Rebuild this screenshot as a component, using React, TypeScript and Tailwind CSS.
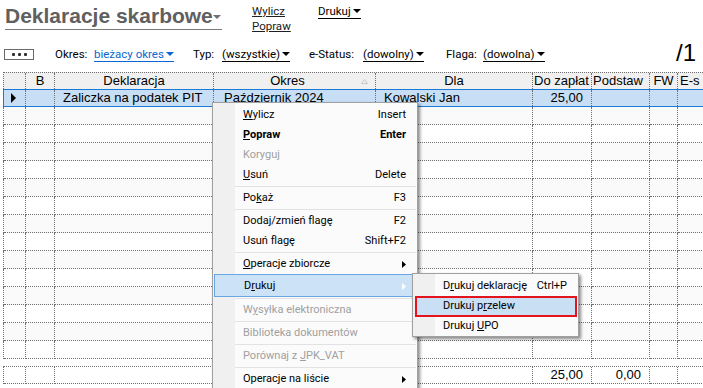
import type { ReactNode } from "react";

const dot = "border-dotted border-[#6f6f6f]";

const colW = [
  "w-[22px]",
  "w-[29px]",
  "w-[159px]",
  "w-[162px]",
  "w-[157px]",
  "w-[59px]",
  "w-[58px]",
  "w-[28px]",
  "w-[60px]",
];

function Caret({ color = "#000" }: { color?: string }) {
  return (
    <svg width="8" height="4" viewBox="0 0 8 4" className="ml-[2px] shrink-0">
      <path d="M0 0h8L4 4z" fill={color} />
    </svg>
  );
}

function Picker({ children, blue }: { children: ReactNode; blue?: boolean }) {
  return (
    <span
      className={`inline-flex h-[15px] items-center border-b leading-[14px] ${
        blue ? "border-[#0a66d0] text-[#0a66d0]" : "border-black text-black"
      }`}
    >
      {children}
      <Caret color={blue ? "#0a66d0" : "#000"} />
    </span>
  );
}

function Row({ shade }: { shade: boolean }) {
  return (
    <div className={`flex h-[18px] border-l ${dot} ${shade ? "bg-[#fafafa]" : "bg-white"}`}>
      {colW.map((w) => (
        <div key={w} className={`${w} shrink-0 border-r border-b ${dot}`} />
      ))}
    </div>
  );
}

type Item = {
  label: ReactNode;
  shortcut?: string;
  disabled?: boolean;
  bold?: boolean;
  arrow?: boolean;
  active?: boolean;
  sep?: boolean;
};

const menu: Item[] = [
  { label: <><u>W</u>ylicz</>, shortcut: "Insert" },
  { label: <><u>P</u>opraw</>, shortcut: "Enter", bold: true },
  { label: <>Korygu<u>j</u></>, disabled: true },
  { label: <><u>U</u>suń</>, shortcut: "Delete" },
  { sep: true, label: null },
  { label: <>Po<u>k</u>aż</>, shortcut: "F3" },
  { sep: true, label: null },
  { label: <>Dodaj/zmień fla<u>g</u>ę</>, shortcut: "F2" },
  { label: <>Usuń fla<u>g</u>ę</>, shortcut: "Shift+F2" },
  { sep: true, label: null },
  { label: <><u>O</u>peracje zbiorcze</>, arrow: true },
  { label: <>D<u>r</u>ukuj</>, arrow: true, active: true },
  { sep: true, label: null },
  { label: <>W<u>y</u>syłka elektroniczna</>, disabled: true },
  { sep: true, label: null },
  { label: <>Biblioteka dokumentów</>, disabled: true },
  { sep: true, label: null },
  { label: <>Porównaj z <u>J</u>PK_VAT</>, disabled: true },
  { sep: true, label: null },
  { label: <>Operacje na liście</>, arrow: true },
];

function MenuRow({ it }: { it: Item }) {
  if (it.sep)
    return (
      <div className="flex h-[3px] items-center pl-[22px] pr-[1px]">
        <div className="h-px w-full bg-[#e2e2e2]" />
      </div>
    );
  return (
    <div
      className={`flex items-center justify-between ${
        it.active
          ? "ml-[1px] mr-[3px] h-[23px] border border-[#6aa6e4] bg-[#cce3f7] pl-[29px] pr-[7px] pt-[2px]"
          : "h-[20px] pl-[30px] pr-[11px]"
      } ${it.disabled ? "text-[#a0a0a0]" : "text-black"} ${it.bold ? "font-bold" : ""}`}
    >
      <span>{it.label}</span>
      {it.shortcut && <span>{it.shortcut}</span>}
      {it.arrow && (
        <svg width="4" height="7" viewBox="0 0 4 7">
          <path d="M0 0l4 3.5L0 7z" fill={it.active ? "#ffffff" : "#000"} />
        </svg>
      )}
    </div>
  );
}

export default function App() {
  return (
    <div className="relative h-[388px] w-[703px] overflow-hidden bg-white font-['Roboto',sans-serif] text-[11.5px] text-black">
      {/* naglowek */}
      <div className="flex h-[47px] items-start pt-[4px]">
        <div className="ml-[5px] flex h-[26px] w-[217px] items-start border-b border-[#7a7a7a]">
          <span className="font-['Liberation_Sans',Arial,sans-serif] text-[21px] font-bold leading-[24px] text-[#606060]">
            Deklaracje skarbowe
          </span>
          <svg width="8" height="4" viewBox="0 0 8 4" className="ml-auto mr-[1px] mt-[11px]">
            <path d="M0 0h8L4 4z" fill="#707070" />
          </svg>
        </div>
        <div className="ml-[30px] flex w-[66px] flex-col leading-[15px] text-[#202020]">
          <span className="underline">Wylicz</span>
          <span className="underline">Popraw</span>
        </div>
        <Picker>Drukuj</Picker>
      </div>

      {/* filtry */}
      <div className="flex h-[15px] items-start pl-[4px]">
        <div className="w-[51px]">
          <div className="mt-[2px] flex h-[11px] w-[30px] items-center justify-center gap-[3px] border border-[#6a6a6a]">
            <div className="size-[3px] rounded-[1px] bg-[#303030]" />
            <div className="size-[3px] rounded-[1px] bg-[#303030]" />
            <div className="size-[3px] rounded-[1px] bg-[#303030]" />
          </div>
        </div>
        <div className="flex w-[138px] leading-[14px]">
          <span className="w-[39px]">Okres:</span>
          <Picker blue>bieżacy okres</Picker>
        </div>
        <div className="flex w-[116px] leading-[14px]">
          <span className="w-[29px]">Typ:</span>
          <Picker>(wszystkie)</Picker>
        </div>
        <div className="flex w-[137px] leading-[14px]">
          <span className="w-[54px]">e-Status:</span>
          <Picker>(dowolny)</Picker>
        </div>
        <div className="flex w-[230px] leading-[14px]">
          <span className="w-[37px]">Flaga:</span>
          <Picker>(dowolna)</Picker>
        </div>
        <span className="font-['Liberation_Sans',Arial,sans-serif] text-[24px] leading-[11px]">/1</span>
      </div>

      {/* tabela */}
      <div className="ml-[3px] mt-[10px] font-['Liberation_Sans',Arial,sans-serif] text-[13px] leading-[16px]">
        <div className={`flex border-l border-t bg-[#f0f0f0] ${dot}`}>
          {["", "B", "Deklaracja", "Okres", "Dla", "Do zapłat", "Podstaw", "FW", "E-s"].map((h, i) => (
            <div
              key={i}
              className={`${colW[i]} relative h-[16px] shrink-0 overflow-hidden whitespace-nowrap border-r ${dot} ${
                i >= 5 && i !== 7 ? "pl-[1px] text-left" : "text-center"
              } ${i === 3 ? "pr-[14px]" : ""} ${i === 8 ? "pl-[2px]" : ""}`}
            >
              {h}
              {i === 3 && (
                <svg width="7" height="5" viewBox="0 0 7 5" className="absolute right-[7px] top-[6px]">
                  <path d="M3.5 0.5L6.5 4.5H0.5z" fill="none" stroke="#c8c8c8" />
                </svg>
              )}
            </div>
          ))}
        </div>

        <div className="flex h-[18px] border-y border-l border-[#1a7bd6] bg-[#c7def4]">
          <div className={`${colW[0]} flex shrink-0 items-center border-r pl-[7px] ${dot}`}>
            <svg width="5" height="10" viewBox="0 0 5 10">
              <path d="M0 0l5 5-5 5z" fill="#000" />
            </svg>
          </div>
          <div className={`${colW[1]} shrink-0 border-r ${dot}`} />
          <div className={`${colW[2]} shrink-0 whitespace-nowrap border-r pl-[8px] ${dot}`}>Zaliczka na podatek PIT</div>
          <div className={`${colW[3]} shrink-0 whitespace-nowrap border-r pl-[10px] ${dot}`}>Październik 2024</div>
          <div className={`${colW[4]} shrink-0 whitespace-nowrap border-r pl-[8px] ${dot}`}>Kowalski Jan</div>
          <div className={`${colW[5]} shrink-0 border-r pr-[8px] text-right ${dot}`}>25,00</div>
          <div className={`${colW[6]} shrink-0 border-r ${dot}`} />
          <div className={`${colW[7]} shrink-0 border-r ${dot}`} />
          <div className={`${colW[8]} shrink-0 border-r ${dot}`} />
        </div>

        {Array.from({ length: 14 }).map((_, i) => (
          <Row key={i} shade={i % 2 === 0} />
        ))}

        <div className={`mt-[7px] flex h-[18px] border-l border-t ${dot}`}>
          {colW.map((w, i) => (
            <div key={w} className={`${w} shrink-0 border-r border-b pr-[8px] text-right ${dot}`}>
              {i === 5 ? "25,00" : i === 6 ? "0,00" : ""}
            </div>
          ))}
        </div>
      </div>

      {/* menu kontekstowe */}
      <div className="absolute left-[212px] top-[102px] w-[206px] border border-[#a0a0a0] bg-[linear-gradient(to_right,#f0f0f0_22px,#fbfbfb_22px)] pt-[2px] text-[11px] shadow-[2px_2px_3px_rgba(0,0,0,0.45)]">
        {menu.map((it, i) => (
          <MenuRow key={i} it={it} />
        ))}
      </div>

      {/* podmenu Drukuj */}
      <div className="absolute left-[412px] top-[273px] w-[167px] border border-[#a0a0a0] bg-[linear-gradient(to_right,#f0f0f0_22px,#fbfbfb_22px)] pt-[2px] text-[11px] shadow-[2px_2px_3px_rgba(0,0,0,0.45)]">
        <div className="flex h-[20px] items-center justify-between pl-[30px] pr-[11px]">
          <span>
            D<u>r</u>ukuj deklarację
          </span>
          <span>Ctrl+P</span>
        </div>
        <div className="ml-[2px] mr-[1px] flex h-[21px] items-center border-2 border-[#e3141e] bg-[#c9dff4] pl-[26px]">
          <span>
            Drukuj p<u>r</u>zelew
          </span>
        </div>
        <div className="flex h-[19px] items-center pl-[30px]">
          <span>
            Drukuj <u>U</u>PO
          </span>
        </div>
      </div>
    </div>
  );
}
